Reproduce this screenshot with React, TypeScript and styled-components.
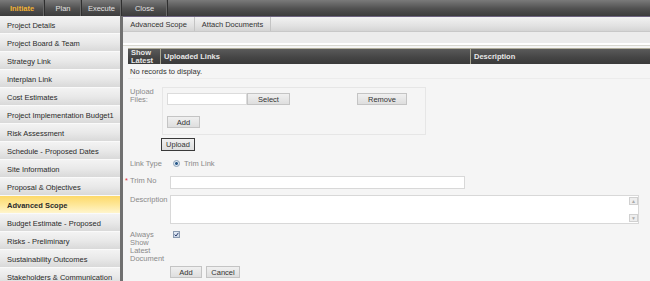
import styled, { createGlobalStyle } from "styled-components";

const GlobalStyle = createGlobalStyle`
  html, body {
    margin: 0;
    padding: 0;
    background: #f5f5f5;
  }
  * {
    box-sizing: border-box;
  }
`;

const Page = styled.div`
  width: 650px;
  height: 281px;
  overflow: hidden;
  display: flex;
  flex-direction: column;
  font-family: "Liberation Sans", Arial, sans-serif;
  font-size: 7.5px;
  color: #333;
`;

const TopNav = styled.div`
  display: flex;
  height: 16px;
  flex: none;
  background: linear-gradient(#7a7a7a, #505050 55%, #3c3c3c);
`;

const NavTab = styled.div<{ $active?: boolean; $w: number }>`
  width: ${(p) => p.$w}px;
  display: flex;
  align-items: center;
  justify-content: center;
  border-right: 1px solid #2f2f2f;
  box-shadow: inset -1px 0 0 #6a6a6a;
  color: ${(p) => (p.$active ? "#f2b233" : "#e2e2e2")};
  font-weight: ${(p) => (p.$active ? "bold" : "normal")};
`;

const Body = styled.div`
  flex: 1;
  display: flex;
  min-height: 0;
`;

const Sidebar = styled.div`
  width: 123px;
  flex: none;
  border-right: 3px solid #707070;
  display: flex;
  flex-direction: column;
`;

const SideItem = styled.div<{ $active?: boolean }>`
  height: 18px;
  flex: none;
  display: flex;
  align-items: center;
  padding: 1px 0 0 7px;
  border-bottom: 1px solid #fafafa;
  color: #2a2a2a;
  font-weight: ${(p) => (p.$active ? "bold" : "normal")};
  background: ${(p) =>
    p.$active
      ? "linear-gradient(#fdd96a, #fee797 50%, #fff5cc)"
      : "linear-gradient(#f3f3f3, #e9e9e9 50%, #d9d9d9)"};
`;

const Main = styled.div`
  flex: 1;
  display: flex;
  flex-direction: column;
  min-width: 0;
`;

const TabBar = styled.div`
  height: 16px;
  flex: none;
  display: flex;
  border-top: 1px solid #6d6480;
  background: linear-gradient(#f2f2f2, #e2e2e2 60%, #d4d4d4);
  border-bottom: 1px solid #c8c8c8;
`;

const Tab = styled.div<{ $w: number }>`
  width: ${(p) => p.$w}px;
  display: flex;
  align-items: center;
  justify-content: center;
  border-right: 1px solid #c4c4c4;
  color: #333;
`;

const Strip = styled.div`
  height: 13px;
  flex: none;
  background: #ececec;
  border-bottom: 2px solid #fff;
  box-shadow: 0 1px 0 #d8d8d0;
`;

const Content = styled.div`
  padding: 3px 0 0 5px;
  display: flex;
  flex-direction: column;
`;

const Grid = styled.div`
  display: flex;
  flex-direction: column;
`;

const GridHead = styled.div`
  height: 16px;
  display: grid;
  grid-template-columns: 33px 310px 1fr;
  background: linear-gradient(#5a5a5a, #444 60%, #3a3a3a);
  border-top: 1px solid #b0ad9a;
`;

const HeadCell = styled.div`
  color: #e8e8e8;
  font-weight: bold;
  padding: 0 3px;
  line-height: 7.5px;
  display: flex;
  align-items: center;
  border-right: 1px solid #a8a590;
  &:last-child {
    border-right: none;
  }
`;

const EmptyRow = styled.div`
  height: 15px;
  display: flex;
  align-items: center;
  padding-left: 2px;
  color: #333;
  border-bottom: 1px solid #ececec;
`;

const UploadRow = styled.div`
  margin-top: 8px;
  display: flex;
  padding-left: 2px;
`;

const Label = styled.div<{ $w?: number }>`
  width: ${(p) => p.$w ?? 40}px;
  flex: none;
  color: #8a8a8a;
  line-height: 8px;
  padding-top: 1px;
`;

const UploadBox = styled.div`
  width: 264px;
  height: 48px;
  border: 1px solid #e6e6e6;
  padding: 5px 4px;
  display: flex;
  flex-direction: column;
  gap: 11px;
`;

const FileLine = styled.div`
  display: flex;
  align-items: center;
`;

const FileInput = styled.div`
  width: 80px;
  height: 12px;
  background: #fff;
  border: 1px solid #dcdcdc;
`;

const Button = styled.div<{ $w: number; $dark?: boolean }>`
  width: ${(p) => p.$w}px;
  height: ${(p) => (p.$dark ? 13 : 12)}px;
  display: flex;
  align-items: center;
  justify-content: center;
  border: 1px solid ${(p) => (p.$dark ? "#3a3a3a" : "#c4c4c4")};
  background: linear-gradient(#f0f0f0, #dedede);
  color: #333;
  flex: none;
`;

const Spacer = styled.div<{ $w: number }>`
  width: ${(p) => p.$w}px;
  flex: none;
`;

const UploadBtnRow = styled.div`
  margin-top: 3px;
  padding-left: 33px;
`;

const FormRow = styled.div<{ $mt: number }>`
  margin-top: ${(p) => p.$mt}px;
  display: flex;
  align-items: flex-start;
  padding-left: 2px;
`;

const Required = styled.span`
  color: #e0303a;
  margin-left: -5px;
  margin-right: 2px;
`;

const RadioWrap = styled.div`
  display: flex;
  align-items: center;
  gap: 4px;
  color: #888;
  padding-left: 3px;
`;

const Radio = styled.span`
  width: 7px;
  height: 7px;
  border-radius: 50%;
  border: 1px solid #8aa0b8;
  background: radial-gradient(#2a5a8a 35%, #dfe8f0 45%);
`;

const TextInput = styled.div`
  width: 295px;
  height: 13px;
  background: #fff;
  border: 1px solid #d8d8d8;
`;

const TextArea = styled.div`
  width: 469px;
  height: 29px;
  background: #fff;
  border: 1px solid #d8d8d8;
  display: flex;
  justify-content: flex-end;
`;

const ScrollCol = styled.div`
  width: 9px;
  display: flex;
  flex-direction: column;
  justify-content: space-between;
  padding: 1px 0;
`;

const ScrollBtn = styled.div`
  height: 8px;
  border: 1px solid #d0d0d0;
  background: #eee;
  display: flex;
  align-items: center;
  justify-content: center;
  color: #aaa;
  font-size: 5px;
`;

const CheckBox = styled.div`
  width: 7px;
  height: 7px;
  margin: 1px 0 0 3px;
  border: 1px solid #8a9ab0;
  background: linear-gradient(#e4ecf6, #c8d4e4);
  display: flex;
  align-items: center;
  justify-content: center;
`;

const ButtonRow = styled.div`
  margin-top: 3px;
  padding-left: 42px;
  display: flex;
  gap: 4px;
`;

const navTabs = [
  { name: "Initiate", w: 45, active: true },
  { name: "Plan", w: 37 },
  { name: "Execute", w: 40 },
  { name: "Close", w: 46 },
];

const sideItems = [
  "Project Details",
  "Project Board & Team",
  "Strategy Link",
  "Interplan Link",
  "Cost Estimates",
  "Project Implementation Budget1",
  "Risk Assessment",
  "Schedule - Proposed Dates",
  "Site Information",
  "Proposal & Objectives",
  "Advanced Scope",
  "Budget Estimate - Proposed",
  "Risks - Preliminary",
  "Sustainability Outcomes",
  "Stakeholders & Communication",
];

export default function App() {
  return (
    <Page>
      <GlobalStyle />
      <TopNav>
        {navTabs.map((t) => (
          <NavTab key={t.name} $w={t.w} $active={t.active}>
            {t.name}
          </NavTab>
        ))}
      </TopNav>
      <Body>
        <Sidebar>
          {sideItems.map((s) => (
            <SideItem key={s} $active={s === "Advanced Scope"}>
              {s}
            </SideItem>
          ))}
        </Sidebar>
        <Main>
          <TabBar>
            <Tab $w={72}>Advanced Scope</Tab>
            <Tab $w={76}>Attach Documents</Tab>
          </TabBar>
          <Strip />
          <Content>
            <Grid>
              <GridHead>
                <HeadCell>
                  Show
                  <br />
                  Latest
                </HeadCell>
                <HeadCell>Uploaded Links</HeadCell>
                <HeadCell>Description</HeadCell>
              </GridHead>
              <EmptyRow>No records to display.</EmptyRow>
            </Grid>

            <UploadRow>
              <Label $w={32}>
                Upload
                <br />
                Files:
              </Label>
              <UploadBox>
                <FileLine>
                  <FileInput />
                  <Button $w={43}>Select</Button>
                  <Spacer $w={67} />
                  <Button $w={50}>Remove</Button>
                </FileLine>
                <FileLine>
                  <Button $w={33}>Add</Button>
                </FileLine>
              </UploadBox>
            </UploadRow>
            <UploadBtnRow>
              <Button $w={34} $dark>
                Upload
              </Button>
            </UploadBtnRow>

            <FormRow $mt={8}>
              <Label>Link Type</Label>
              <RadioWrap>
                <Radio />
                Trim Link
              </RadioWrap>
            </FormRow>

            <FormRow $mt={8}>
              <Label>
                <Required>*</Required>Trim No
              </Label>
              <TextInput />
            </FormRow>

            <FormRow $mt={6}>
              <Label>Description</Label>
              <TextArea>
                <ScrollCol>
                  <ScrollBtn>▲</ScrollBtn>
                  <ScrollBtn>▼</ScrollBtn>
                </ScrollCol>
              </TextArea>
            </FormRow>

            <FormRow $mt={6}>
              <Label>
                Always
                <br />
                Show
                <br />
                Latest
                <br />
                Document
              </Label>
              <CheckBox>
                <svg width="5" height="5" viewBox="0 0 5 5">
                  <path d="M0.6 2.6 L2 4 L4.4 0.8" stroke="#2a3a6a" strokeWidth="1" fill="none" />
                </svg>
              </CheckBox>
            </FormRow>

            <ButtonRow>
              <Button $w={32}>Add</Button>
              <Button $w={34}>Cancel</Button>
            </ButtonRow>
          </Content>
        </Main>
      </Body>
    </Page>
  );
}
